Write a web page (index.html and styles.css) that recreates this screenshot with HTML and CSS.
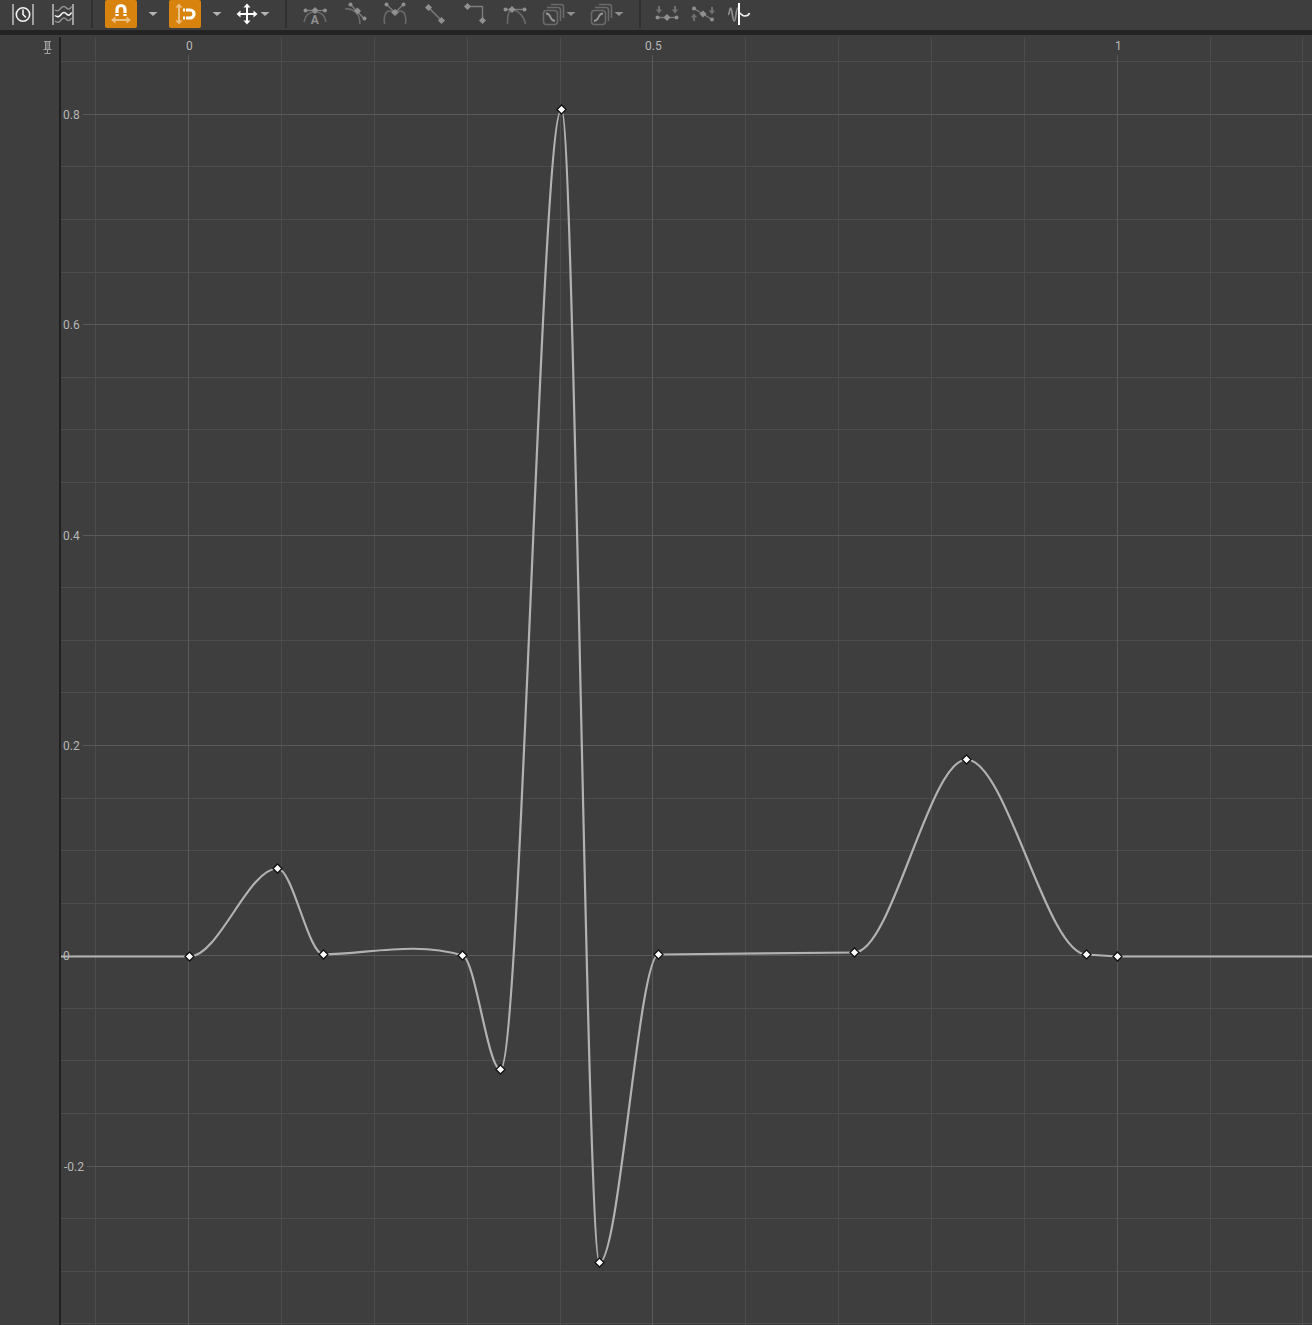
FILE: index.html
```html
<!DOCTYPE html>
<html lang="en">
<head>
<meta charset="utf-8">
<title>Curve Editor</title>
<link rel="stylesheet" href="styles.css">
</head>
<body>
<main class="editor">
<header class="toolbar">
  <svg class="tool" width="40" height="30" viewBox="0 0 40 30"><g class="bars"><path d="M13 4v21M33 4v21"/></g><circle class="bright" cx="23" cy="14.5" r="6.7"/><path class="bright" d="M23 9.500v5l3 3"/></svg>
  <svg class="tool" width="51" height="30" viewBox="40 0 51 30"><g class="bars"><path d="M53 4v21M73 4v21"/></g><path class="faint" d="M55 10c3 2 4.500 0 6-2s4-2 5.500 0 4 1 5-1.500M55 21c3 2.500 5 .5 6.500-1.500s3.500-2 5 0 4 1 5-1.500"/><path class="bright" d="M55 15.500c3 2.500 5 .5 6.500-1.500s3.500-2 5 0 4 1 5-1.500"/></svg>
  <i class="separator"></i>
  <svg class="tool active first" width="32" height="28" viewBox="105 0 32 28"><path class="magnet" d="M117 16V9.500a4 4 0 0 1 8 0V16"/><path class="gap" d="M114 13.500h14"/><path class="soft" d="M113 20h16"/><path class="softfill" d="M111 20l4.500-3.500v7zM131 20l-4.500-3.500v7z"/></svg>
  <svg class="tool" width="32" height="30" viewBox="137 0 32 30"><path class="caret" d="M148.500 12h9l-4.500 4z"/></svg>
  <svg class="tool active" width="32" height="28" viewBox="169 0 32 28"><path class="soft" d="M179 6v16"/><path class="softfill" d="M179 3.500l3.500 4h-7zM179 24.500l3.500-4h-7z"/><path class="magnet" d="M183 10h7a4 4 0 0 1 0 8h-7"/><path class="gap" d="M185.500 8v12"/></svg>
  <svg class="tool" width="32" height="30" viewBox="201 0 32 30"><path class="caret" d="M212.500 12h9l-4.500 4z"/></svg>
  <svg class="tool" width="52" height="30" viewBox="233 0 52 30"><path class="move" d="M247 6v16M239 14h16"/><path class="white" d="M247 3.500l3.500 4h-7zM247 24.500l3.500-4h-7zM236.500 14l4-3.500v7zM257.500 14l-4-3.500v7z"/><path class="caret" d="M260.500 12h9l-4.500 4z"/></svg>
  <i class="separator"></i>
  <svg class="tool dim" width="48" height="30" viewBox="287 0 48 30"><path class="curve" d="M304 22c1-6 5-10 11-10s10 4 11 10"/><path d="M306 10.500h19"/><circle cx="305.500" cy="10.500" r="2"/><circle cx="325" cy="10.500" r="2"/><path class="solid" d="M315 7l3.500 3.500-3.500 3.500-3.500-3.500z"/><text x="314.700" y="24">A</text></svg>
  <svg class="tool dim" width="40" height="30" viewBox="335 0 40 30"><path class="curve" d="M345 9c8-1 15 4 15 15"/><path d="M351 5l13 13.500"/><circle cx="350.500" cy="4.500" r="2"/><circle cx="364.500" cy="18.500" r="2"/><path class="solid" d="M357.500 7.500l3.500 3.500-3.500 3.500-3.500-3.500z"/></svg>
  <svg class="tool dim" width="40" height="30" viewBox="375 0 40 30"><path class="curve" d="M384.500 24c-1-8 1-13 5-13 2 0 4 1 5.500 2 2-1 4-2 5.500-2 4 0 6 5 5 13"/><path d="M386.500 4.500l8.500 8 8.500-8"/><circle cx="386.500" cy="4.500" r="2"/><circle cx="403.500" cy="4.500" r="2"/><path class="solid" d="M395 9l3.700 3.500-3.700 3.500-3.700-3.500z"/></svg>
  <svg class="tool dim" width="40" height="30" viewBox="415 0 40 30"><path d="M428.500 7.500l13 13"/><path class="solid" d="M428.500 4l3.500 3.500-3.500 3.500-3.500-3.500zM441.500 17l3.500 3.500-3.500 3.500-3.500-3.500z"/></svg>
  <svg class="tool dim" width="40" height="30" viewBox="455 0 40 30"><path d="M467.500 6.500h15v14"/><path class="solid" d="M467.500 3l3.500 3.500-3.500 3.500-3.500-3.500zM482.500 17l3.500 3.500-3.500 3.500-3.500-3.500z"/></svg>
  <svg class="tool dim" width="40" height="30" viewBox="495 0 40 30"><path class="curve" d="M507.500 24c0-8 1-14 4.500-14 6 0 12 6 13.500 14"/><path d="M506 9.500h18"/><circle cx="505.500" cy="9.500" r="2"/><circle cx="524.500" cy="9.500" r="2"/><path class="solid" d="M512 6l3.500 3.500-3.500 3.500-3.500-3.500z"/></svg>
  <svg class="tool dim" width="48" height="30" viewBox="535 0 48 30"><g class="curve"><rect x="543.500" y="10.500" width="14" height="14" rx="3"/><path d="M547 7.500h11q2.500 0 2.500 2.500v11M551 4.500h10q2.500 0 2.500 2.500v11"/></g><path class="preset" d="M546 13.500c6 0 3 7.500 9 7.500"/><path class="solid" d="M566.500 12h9l-4.500 4z"/></svg>
  <svg class="tool dim" width="56" height="30" viewBox="583 0 56 30"><g class="curve"><rect x="591.500" y="10.500" width="14" height="14" rx="3"/><path d="M595 7.500h11q2.500 0 2.500 2.500v11M599 4.500h10q2.500 0 2.500 2.500v11"/></g><path class="preset" d="M594 21c6 0 3-7.500 9-7.500"/><path class="solid" d="M614.500 12h9l-4.500 4z"/></svg>
  <i class="separator"></i>
  <svg class="tool dim" width="44" height="30" viewBox="641 0 44 30"><path d="M657 17.500h20"/><circle cx="657.500" cy="17.500" r="2"/><circle cx="676.500" cy="17.500" r="2"/><path class="solid" d="M667 14l3.500 3.500-3.500 3.500-3.500-3.500z"/><path class="arrow" d="M658 6h2v3.500h2.200l-3.200 4-3.200-4h2.200zM674 6h2v3.500h2.200l-3.200 4-3.200-4h2.200z"/></svg>
  <svg class="tool dim" width="40" height="30" viewBox="685 0 40 30"><path d="M694 8.500l18 11"/><circle cx="694" cy="8.500" r="2"/><circle cx="712" cy="19.500" r="2"/><path class="solid" d="M703 10.500l3.500 3.500-3.500 3.500-3.500-3.500z"/><path class="arrow" d="M693 21h2v-3.500h2.200l-3.200-4-3.200 4h2.200zM711 7h2v3.500h2.200l-3.200 4-3.200-4h2.200z"/></svg>
  <svg class="tool" width="36" height="30" viewBox="725 0 36 30"><path class="wave" d="M728 14.500c2 0 1.200-6.500 2.700-6.500s1.800 13 3.600 13S735.800 8 738 8"/><path class="bright" d="M739 13c2 0 3 3 6 3 3 0 4-1.500 4.500-3"/><path class="cursor" d="M739 3v22"/></svg>
</header>
<section class="workspace">
  <aside class="gutter"><svg width="59" height="30" viewBox="0 37 59 30"><path class="pinbody" d="M45.500 42h4v7h-4z"/><path class="pin" d="M44 41.500h7M45.500 41.500v8M49.500 41.500v8M43.500 49.500h8M47.500 49.500v4M44.500 53.500h6"/></svg></aside>
  <svg class="plot" width="1251" height="1288" viewBox="61 37 1251 1288">
    <path class="minor" d="M95.500 37V1325M281.500 37V1325M374.500 37V1325M467.500 37V1325M560.500 37V1325M745.500 37V1325M838.500 37V1325M931.500 37V1325M1024.500 37V1325M1210.500 37V1325M1302.500 37V1325"/>
    <path class="minor" d="M61 61.500H1312M61 166.500H1312M61 219.500H1312M61 272.500H1312M61 377.500H1312M61 429.500H1312M61 482.500H1312M61 587.500H1312M61 640.500H1312M61 692.500H1312M61 798.500H1312M61 850.500H1312M61 903.500H1312M61 1008.500H1312M61 1060.500H1312M61 1113.500H1312M61 1218.500H1312M61 1271.500H1312M61 1323.500H1312"/>
    <path class="major" d="M188.500 55V1325M652.500 55V1325M1117.500 55V1325M83 114.500H1312M83 324.500H1312M83 535.500H1312M83 745.500H1312M73 955.500H1312M87 1166.500H1312"/>
    <path class="signal" d="M61 956.500H189.500C218.800 956.500 248.200 868.500 277.500 868.500C292.800 868.500 308.200 954.500 323.500 954.500C370 953.500 416 941.500 462.500 955.500C475.200 958 487.800 1069.500 500.500 1069.500C520.800 1069.500 541.200 109.500 561.500 109.500C574.200 109.500 586.800 1262.500 599.500 1262.500C619.200 1262.500 638.800 954.500 658.500 954.500L854.500 952.500C891.800 952.500 929.200 759.500 966.500 759.500C1006.500 759.500 1046.500 954.500 1086.500 954.500L1117.500 956.500H1312"/>
    <g class="labels">
      <text x="186" y="50">0</text><text x="645" y="50">0.5</text><text x="1115" y="50">1</text>
      <text x="63" y="119">0.8</text><text x="63" y="329">0.6</text><text x="63" y="540">0.4</text><text x="63" y="750">0.2</text><text x="63" y="960">0</text><text x="64" y="1171">-0.2</text>
    </g>
    <path class="key" d="M189.500 952l4.500 4.500-4.500 4.500-4.500-4.500zM277.500 864l4.500 4.500-4.500 4.500-4.500-4.500zM323.500 950l4.500 4.500-4.500 4.500-4.500-4.500zM462.500 951l4.500 4.500-4.500 4.500-4.500-4.500zM500.500 1065l4.500 4.500-4.500 4.500-4.500-4.500zM561.500 105l4.500 4.500-4.500 4.500-4.500-4.500zM599.500 1258l4.500 4.500-4.500 4.500-4.500-4.500zM658.500 950l4.500 4.500-4.500 4.500-4.500-4.500zM854.500 948l4.500 4.500-4.500 4.500-4.500-4.500zM966.500 755l4.500 4.500-4.500 4.500-4.500-4.500zM1086.500 950l4.500 4.500-4.500 4.500-4.500-4.500zM1117.500 952l4.500 4.500-4.500 4.500-4.500-4.500z"/>
  </svg>
</section>
</main>
</body>
</html>
```
FILE: styles.css
```css
body {
  margin: 0;
  background: #3e3e3e;
  font-family: Roboto, "Liberation Sans", sans-serif;
}
.editor {
  display: flex;
  flex-direction: column;
  width: 1312px;
  height: 1325px;
  overflow: hidden;
}
.toolbar {
  display: flex;
  align-items: flex-start;
  flex: none;
  height: 30px;
  border-bottom: 5px solid #232323;
}
.tool { display: block; flex: none; fill: none; }
.active { background: #d9830f; border-radius: 2px; }
.first { margin-left: 12px; }
.separator { flex: none; width: 2px; height: 28px; background: #303030; }
.bars { stroke: #a0a0a0; stroke-width: 2; }
.bright { stroke: #f4f4f4; stroke-width: 1.6; fill: none; }
.faint { stroke: #909090; stroke-width: 1.5; }
.magnet { stroke: #fff; stroke-width: 3.2; }
.gap { stroke: #d9830f; stroke-width: 1; }
.soft { stroke: #edc084; stroke-width: 2; }
.softfill { fill: #edc084; }
.white { fill: #fff; }
.caret { fill: #b4b4b4; }
.move { stroke: #fff; stroke-width: 2; }
.dim { stroke: #7c7c7c; stroke-width: 1.4; }
.dim circle, .dim .solid { fill: #909090; stroke: none; }
.dim .curve { stroke: #6a6a6a; stroke-width: 1.6; }
.dim .preset { stroke: #989898; stroke-width: 1.9; }
.dim .arrow { fill: #707070; stroke: none; }
.dim text {
  fill: #909090;
  stroke: none;
  font-size: 12px;
  font-weight: 700;
  text-anchor: middle;
}
.wave { stroke: #909090; stroke-width: 1.7; }
.cursor { stroke: #fff; stroke-width: 2; }
.workspace { display: flex; flex: none; margin-top: 2px; }
.gutter { width: 59px; border-right: 2px solid #202020; }
.gutter svg, .plot { display: block; flex: none; }
.pin { stroke: #a0a0a0; fill: none; }
.pinbody { fill: #6c6c6c; }
.minor { stroke: #4c4c4c; shape-rendering: crispEdges; }
.major { stroke: #5a5a5a; fill: none; shape-rendering: crispEdges; }
.signal { stroke: #b2b2b2; stroke-width: 2.2; fill: none; }
.labels { fill: #b8b8b8; font-size: 12px; }
.key { fill: #fff; stroke: #111; stroke-width: 1.3; }
```
